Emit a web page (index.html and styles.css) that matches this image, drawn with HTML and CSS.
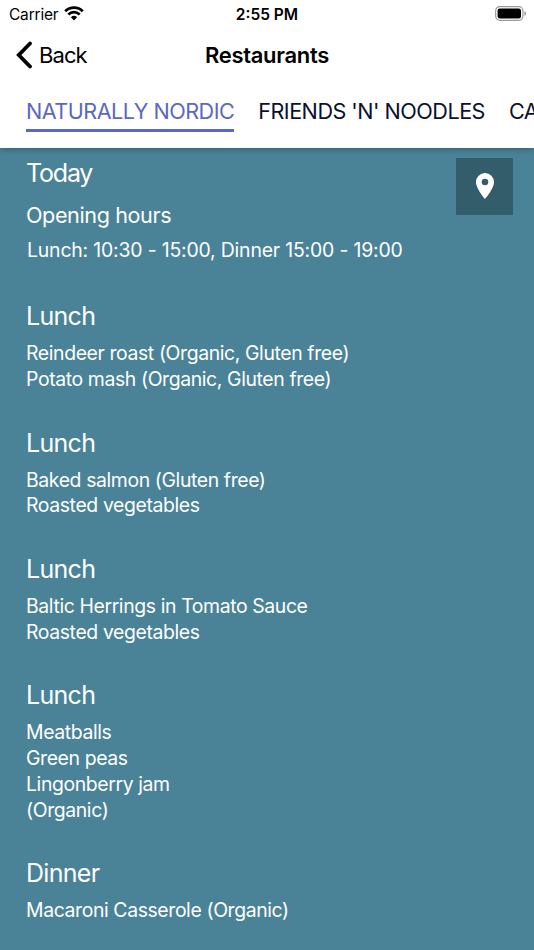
FILE: index.html
```html
<!DOCTYPE html>
<html lang="en">
<head>
  <meta charset="UTF-8" />
  <meta name="viewport" content="width=device-width, initial-scale=1.0" />
  <title>Restaurants</title>
  <link rel="stylesheet" href="styles.css">
</head>
<body>
<header class="header">
  <div class="status-bar">
    <div class="carrier">
      <span>Carrier</span>
      <svg class="wifi" viewBox="0 0 20 15">
        <path d="M1.2 5.2a12.6 12.6 0 0 1 17.6 0" />
        <path d="M4.3 8.5a8.2 8.2 0 0 1 11.4 0" />
        <path class="dot" d="M10 14.4L6.9 11.3a4.5 4.5 0 0 1 6.2 0z" />
      </svg>
    </div>
    <span class="time">2:55 PM</span>
    <svg class="battery" viewBox="0 0 32 15">
      <rect class="shell" x="0.7" y="0.7" width="27.2" height="13.6" rx="4" />
      <rect x="2.6" y="2.6" width="23.4" height="9.8" rx="2.2" />
      <path class="cap" d="M29.4 5v5a2.7 2.7 0 0 0 0-5z" />
    </svg>
  </div>

  <div class="nav-bar">
    <a class="back" href="#">
      <svg class="chevron" viewBox="0 0 16 28"><path d="M14 2.5L2.8 14 14 25.5" /></svg>
      <span>Back</span>
    </a>
    <h1>Restaurants</h1>
  </div>

  <nav class="tabs">
    <a class="tab active" href="#">NATURALLY NORDIC</a>
    <a class="tab" href="#">FRIENDS 'N' NOODLES</a>
    <a class="tab" href="#">CAFE</a>
  </nav>
</header>

<main class="content">
  <button class="map-button" aria-label="Map">
    <svg viewBox="0 0 18 26"><path fill-rule="evenodd" d="M9 0a9 9 0 0 0-9 9c0 6.8 9 17 9 17s9-10.2 9-17a9 9 0 0 0-9-9zm0 12.3a3.3 3.3 0 1 1 0-6.6 3.3 3.3 0 0 1 0 6.6z" /></svg>
  </button>

  <section class="today">
    <h2>Today</h2>
    <h3>Opening hours</h3>
    <p class="hours">Lunch: 10:30 - 15:00, Dinner 15:00 - 19:00</p>
  </section>

  <section class="meal">
    <h2>Lunch</h2>
    <p>Reindeer roast (Organic, Gluten free)</p>
    <p>Potato mash (Organic, Gluten free)</p>
  </section>

  <section class="meal">
    <h2>Lunch</h2>
    <p>Baked salmon (Gluten free)</p>
    <p>Roasted vegetables</p>
  </section>

  <section class="meal">
    <h2>Lunch</h2>
    <p>Baltic Herrings in Tomato Sauce</p>
    <p>Roasted vegetables</p>
  </section>

  <section class="meal">
    <h2>Lunch</h2>
    <p>Meatballs</p>
    <p>Green peas</p>
    <p>Lingonberry jam</p>
    <p>(Organic)</p>
  </section>

  <section class="meal">
    <h2>Dinner</h2>
    <p>Macaroni Casserole (Organic)</p>
  </section>
</main>
</body>
</html>
```
FILE: styles.css
```css
* {
  box-sizing: border-box;
}
body {
  font-family: Inter, "Liberation Sans", sans-serif;
  margin: 0;
  height: 950px;
  overflow: hidden;
  display: flex;
  flex-direction: column;
  background: #4a8397;
  color: #fff;
}
h1, h2, h3, p {
  margin: 0;
  font-weight: 400;
}
a {
  color: inherit;
  text-decoration: none;
}
.header {
  position: relative;
  height: 148px;
  flex-shrink: 0;
  background: #fff;
  color: #000;
  box-shadow: 0 1px 7px rgba(0, 0, 0, 0.3);
}
.status-bar {
  display: grid;
  grid-template-columns: 1fr auto 1fr;
  align-items: center;
  height: 28px;
  padding: 0 7px 0 9px;
  font-size: 15.5px;
}
.carrier {
  display: flex;
  align-items: center;
  gap: 6px;
  letter-spacing: -0.2px;
}
.wifi {
  width: 20px;
  height: 15px;
  margin-top: -2px;
  fill: none;
  stroke: #000;
  stroke-width: 2.7;
}
.wifi .dot {
  fill: #000;
  stroke: none;
}
.time {
  margin-right: 2px;
  font-weight: 600;
}
.battery {
  width: 32px;
  height: 15px;
  margin-top: -2px;
  justify-self: end;
}
.battery .shell {
  fill: none;
  stroke: #999;
  stroke-width: 1.2;
}
.battery .cap {
  fill: #999;
}
.nav-bar {
  display: grid;
  grid-template-columns: 1fr auto 1fr;
  align-items: center;
  height: 53px;
  padding: 0 16px;
}
.back {
  display: flex;
  align-items: center;
  gap: 7px;
  font-size: 22px;
  letter-spacing: -0.9px;
}
.chevron {
  width: 16px;
  height: 28px;
  fill: none;
  stroke: #000;
  stroke-width: 3.8;
  stroke-linecap: round;
}
.nav-bar h1 {
  font-size: 22px;
  font-weight: 600;
  letter-spacing: -0.3px;
}
.tabs {
  display: flex;
  gap: 24px;
  height: 67px;
  padding: 15px 0 0 26px;
  overflow: hidden;
  white-space: nowrap;
  font-size: 21.6px;
  letter-spacing: -0.51px;
  color: #0b1030;
}
.tab {
  height: 36px;
  line-height: 31px;
  flex-shrink: 0;
}
.tab.active {
  color: #5a68c0;
  border-bottom: 3px solid #5a68c0;
}
.content {
  position: relative;
  padding: 10.4px 26px 0;
}
.content h2 {
  font-size: 25px;
  line-height: 30px;
  letter-spacing: -0.7px;
}
.content p {
  font-size: 19.4px;
  line-height: 25.85px;
  letter-spacing: -0.38px;
}
.today h2 {
  letter-spacing: -1.2px;
}
.today h3 {
  margin-top: 14px;
  font-size: 21.6px;
  line-height: 26px;
  letter-spacing: -0.4px;
}
.content .hours {
  margin: 10px 0 37px 1px;
  letter-spacing: -0.17px;
}
.meal {
  margin-bottom: 34.7px;
}
.meal h2 {
  margin-bottom: 10px;
}
.map-button {
  position: absolute;
  top: 9.5px;
  right: 21px;
  display: flex;
  align-items: center;
  justify-content: center;
  width: 57px;
  height: 57px;
  padding: 0;
  border: none;
  background: #335d6b;
  cursor: pointer;
}
.map-button svg {
  width: 18px;
  height: 26px;
  fill: #fff;
}
```
